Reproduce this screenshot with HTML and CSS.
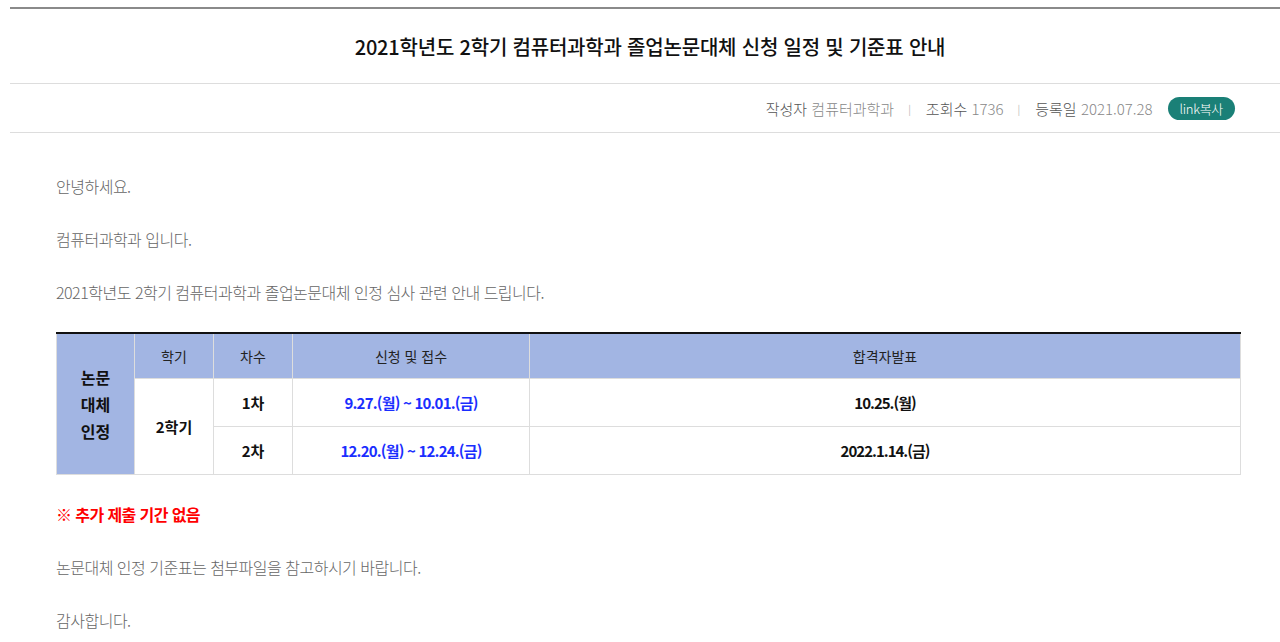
FILE: index.html
```html
<!DOCTYPE html>
<html lang="ko">
<head>
<meta charset="utf-8">
<title>2021학년도 2학기 컴퓨터과학과 졸업논문대체 신청 일정 및 기준표 안내</title>
<link rel="stylesheet" href="styles.css">
</head>
<body>
<div class="board">
  <div class="board-head">
    <h1 class="title">2021학년도 2학기 컴퓨터과학과 졸업논문대체 신청 일정 및 기준표 안내</h1>
  </div>
  <div class="meta">
    <span class="meta-item"><span class="label">작성자</span> <span class="val">컴퓨터과학과</span></span>
    <span class="sep">|</span>
    <span class="meta-item"><span class="label">조회수</span> <span class="val">1736</span></span>
    <span class="sep">|</span>
    <span class="meta-item"><span class="label">등록일</span> <span class="val">2021.07.28</span></span>
    <button class="copy-btn" type="button">link복사</button>
  </div>
  <div class="content">
    <p>안녕하세요.</p>
    <p>컴퓨터과학과 입니다.</p>
    <p>2021학년도 2학기 컴퓨터과학과 졸업논문대체 인정 심사 관련 안내 드립니다.</p>
    <table class="sched">
      <colgroup>
        <col class="c1"><col class="c2"><col class="c3"><col class="c4"><col>
      </colgroup>
      <tbody>
        <tr class="head">
          <th rowspan="3" class="side">논문<br>대체<br>인정</th>
          <th>학기</th>
          <th>차수</th>
          <th>신청 및 접수</th>
          <th>합격자발표</th>
        </tr>
        <tr>
          <td rowspan="2" class="strong">2학기</td>
          <td class="strong">1차</td>
          <td class="blue">9.27.(월) ~ 10.01.(금)</td>
          <td class="strong tight">10.25.(월)</td>
        </tr>
        <tr>
          <td class="strong">2차</td>
          <td class="blue">12.20.(월) ~ 12.24.(금)</td>
          <td class="strong tight">2022.1.14.(금)</td>
        </tr>
      </tbody>
    </table>
    <p class="notice">※ 추가 제출 기간 없음</p>
    <p>논문대체 인정 기준표는 첨부파일을 참고하시기 바랍니다.</p>
    <p>감사합니다.</p>
  </div>
</div>
</body>
</html>
```

FILE: styles.css
```css
html, body {
  margin: 0;
  padding: 0;
  overflow: hidden;
  background: #fff;
}
body {
  font-family: "Noto Sans CJK KR", "Noto Sans", sans-serif;
  color: #666;
}
.board {
  margin: 7px 0 0 10px;
  width: 1280px;
  border-top: 2px solid #8a8a8a;
}
.board-head {
  height: 74px;
  border-bottom: 1px solid #ddd;
  display: flex;
  align-items: center;
  justify-content: center;
}
.title {
  margin: 0;
  font-size: 20px;
  font-weight: 500;
  color: #111;
  letter-spacing: -0.2px;
}
.meta {
  height: 48px;
  border-bottom: 1px solid #ddd;
  display: flex;
  align-items: center;
  justify-content: flex-end;
  padding-right: 55px;
  font-size: 15px;
}
.label { color: #555; font-weight: 300; }
.val { color: #888; font-weight: 300; }
.sep {
  color: #bbb;
  font-size: 10px;
  margin: 0 15px 0 14px;
}
.copy-btn {
  margin-left: 15px;
  height: 23px;
  padding: 0 12px;
  border: 0;
  border-radius: 12px;
  background: #1a8077;
  color: #fff;
  font-family: inherit;
  font-size: 13px;
  font-weight: 300;
  line-height: 23px;
  letter-spacing: -0.3px;
  cursor: pointer;
}
.content {
  padding: 40px 49px 0 46px;
}
.content p {
  margin: 0 0 27px;
  font-size: 16px;
  line-height: 26px;
  font-weight: 300;
  color: #666;
  letter-spacing: -0.5px;
}
.sched {
  width: 100%;
  border-collapse: collapse;
  border-top: 2px solid #111;
  margin-bottom: 26px;
  text-align: center;
  color: #111;
  table-layout: fixed;
}
.c1 { width: 78px; }
.c2 { width: 79px; }
.c3 { width: 79px; }
.c4 { width: 237px; }
.sched th, .sched td {
  border: 1px solid #ddd;
  padding: 0;
}
.sched th {
  background: #a2b5e3;
  height: 44px;
  font-size: 14px;
  font-weight: 400;
  color: #222;
}
.sched td {
  height: 47px;
  font-size: 15px;
}
.sched th.side {
  font-size: 16px;
  font-weight: 700;
  line-height: 27px;
  color: #111;
}
.strong { font-weight: 700; color: #111; }
.tight { letter-spacing: -1px; }
.blue {
  color: #1a2eff;
  font-weight: 700;
  letter-spacing: -0.8px;
}
.content p.notice {
  color: #f00;
  font-weight: 700;
  letter-spacing: -0.6px;
}
```
